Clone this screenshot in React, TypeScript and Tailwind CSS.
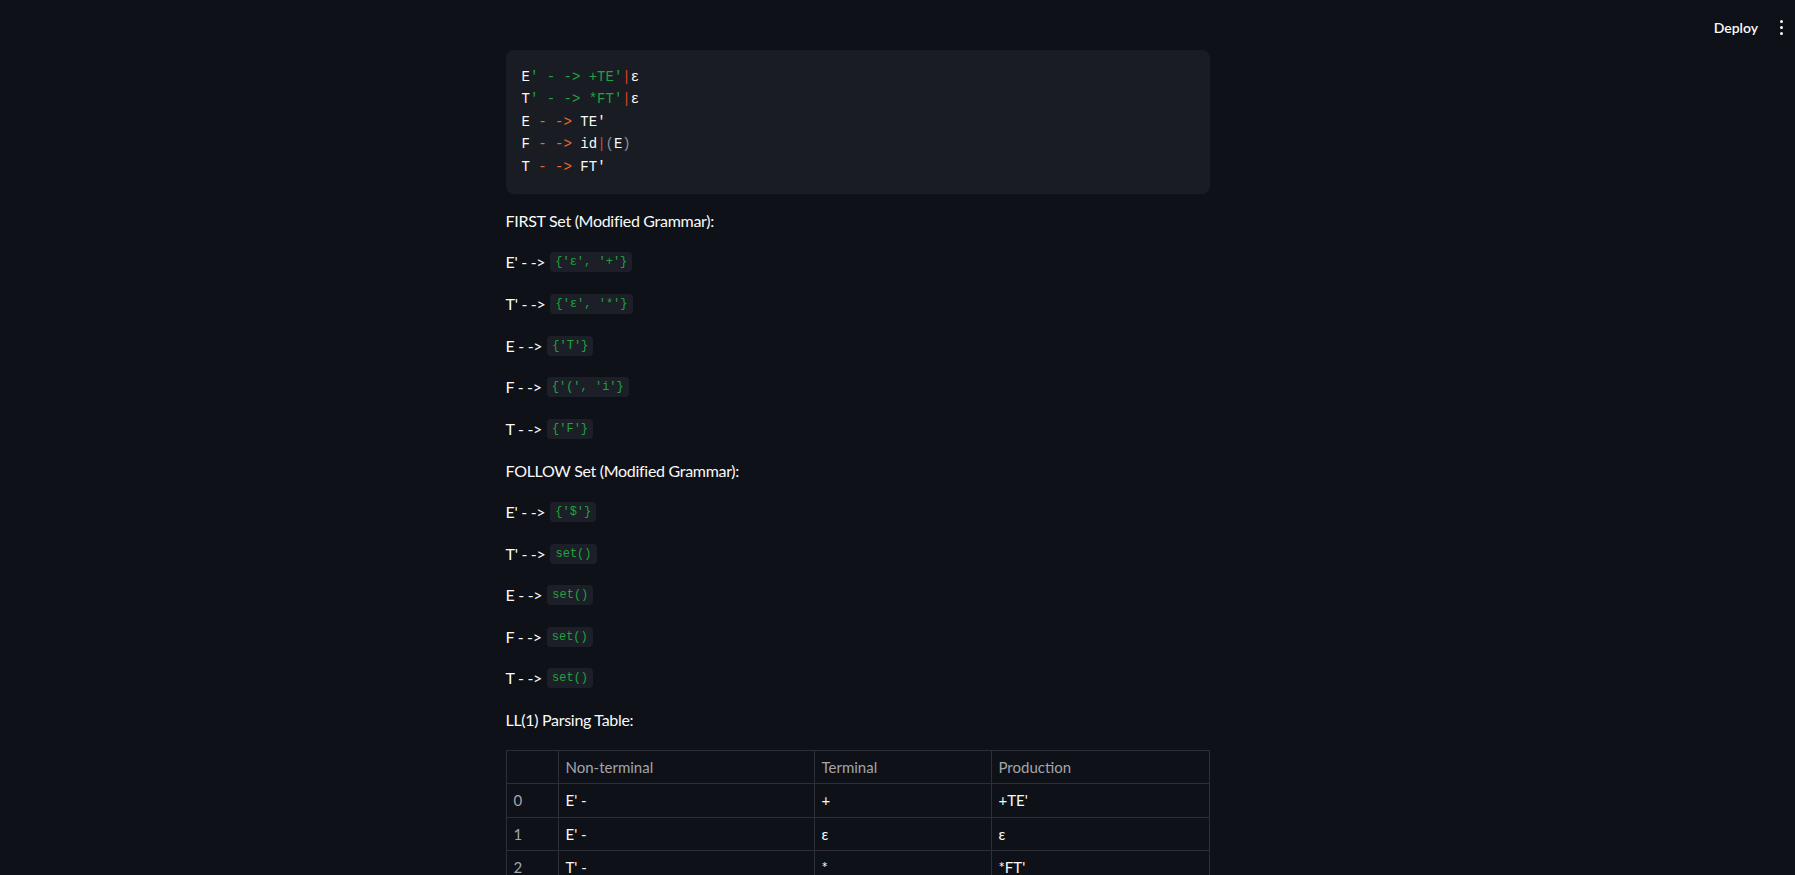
import React from 'react';

const GREEN = 'text-[#1fa33f]';
const ORANGE = 'text-[#f0672c]';
const BAR = 'text-[#dc4420]';
const GREY = 'text-[#8b8f98]';

type Seg = [string, string?];

const codeLines: Seg[][] = [
  [['E'], ["' - -> +TE'", GREEN], ['|', BAR], ['ε']],
  [['T'], ["' - -> *FT'", GREEN], ['|', BAR], ['ε']],
  [['E'], [' - ->', ORANGE], [" TE'"]],
  [['F'], [' - ->', ORANGE], [' id'], ['|', BAR], ['(', GREY], ['E'], [')', GREY]],
  [['T'], [' - ->', ORANGE], [" FT'"]],
];

const firstSet = [
  ["E' - ->", "{'ε', '+'}"],
  ["T' - ->", "{'ε', '*'}"],
  ['E - ->', "{'T'}"],
  ['F - ->', "{'(', 'i'}"],
  ['T - ->', "{'F'}"],
];

const followSet = [
  ["E' - ->", "{'$'}"],
  ["T' - ->", 'set()'],
  ['E - ->', 'set()'],
  ['F - ->', 'set()'],
  ['T - ->', 'set()'],
];

const tableRows = [
  ["E' -", '+', "+TE'"],
  ["E' -", 'ε', 'ε'],
  ["T' -", '*', "*FT'"],
  ["T' -", 'ε', 'ε'],
  ['E -', '(', "TE'"],
  ['E -', 'i', "TE'"],
];

const mono = { fontFamily: '"Liberation Mono", "DejaVu Sans Mono", monospace' };

function SetLine({ label, value }: { label: string; value: string }) {
  return (
    <p className="flex h-[25.6px] items-center gap-[5px] tracking-[-0.3px]">
      <span>{label}</span>
      <code
        style={mono}
        className="rounded-[4px] bg-[#1c1f27] px-[5px] py-[2px] text-[12px] leading-[16px] tracking-normal text-[#1fa33f]"
      >
        {value}
      </code>
    </p>
  );
}

export default function App() {
  return (
    <div
      className="relative min-h-screen bg-[#0e1117] text-[#fafafa]"
      style={{ fontFamily: 'Lato, "Liberation Sans", sans-serif' }}
    >
      {/* header */}
      <div className="absolute right-0 top-0 flex h-[55px] items-center gap-[20px] pr-[10px]">
        <span className="text-[14px] font-semibold text-[#fafafa]">Deploy</span>
        <div className="flex flex-col items-center gap-[3px] px-[2px]">
          <span className="block h-[3px] w-[3px] rounded-full bg-[#fafafa]" />
          <span className="block h-[3px] w-[3px] rounded-full bg-[#fafafa]" />
          <span className="block h-[3px] w-[3px] rounded-full bg-[#fafafa]" />
        </div>
      </div>

      <div className="flex justify-center pr-[80px] pt-[50px]">
        <div className="flex w-[704px] flex-col gap-4 text-[16px]">
          <pre
            style={mono}
            className="rounded-lg bg-[#1a1c24] px-4 py-4 text-[14px] leading-[22.4px] text-[#fafafa]"
          >
            {codeLines.map((line, i) => (
              <div key={i}>
                {line.map(([t, c], j) => (
                  <span key={j} className={c}>
                    {t}
                  </span>
                ))}
              </div>
            ))}
          </pre>

          <p className="-mt-[2px] h-[25.6px] leading-[25.6px] tracking-[-0.3px]">FIRST Set (Modified Grammar):</p>
          {firstSet.map(([l, v]) => (
            <SetLine key={'f' + l} label={l} value={v} />
          ))}

          <p className="h-[25.6px] leading-[25.6px] tracking-[-0.3px]">FOLLOW Set (Modified Grammar):</p>
          {followSet.map(([l, v]) => (
            <SetLine key={'w' + l} label={l} value={v} />
          ))}

          <p className="h-[25.6px] leading-[25.6px] tracking-[-0.3px]">LL(1) Parsing Table:</p>

          <table className="mt-[1px] w-full table-fixed border-collapse text-[15px] leading-[22.4px]">
            <colgroup>
              <col className="w-[52px]" />
              <col className="w-[256px]" />
              <col className="w-[177px]" />
              <col />
            </colgroup>
            <thead>
              <tr>
                <th className="border border-[#2c2f37] px-[7px] py-[5px] text-left font-normal text-[#a3a5aa]"></th>
                <th className="border border-[#2c2f37] px-[7px] py-[5px] text-left font-normal text-[#a3a5aa]">
                  Non-terminal
                </th>
                <th className="border border-[#2c2f37] px-[7px] py-[5px] text-left font-normal text-[#a3a5aa]">
                  Terminal
                </th>
                <th className="border border-[#2c2f37] px-[7px] py-[5px] text-left font-normal text-[#a3a5aa]">
                  Production
                </th>
              </tr>
            </thead>
            <tbody>
              {tableRows.map((r, i) => (
                <tr key={i}>
                  <td className="border border-[#2c2f37] px-[7px] py-[5px] text-[#a3a5aa]">{i}</td>
                  {r.map((c, j) => (
                    <td key={j} className="border border-[#2c2f37] px-[7px] py-[5px]">
                      {c}
                    </td>
                  ))}
                </tr>
              ))}
            </tbody>
          </table>
        </div>
      </div>
    </div>
  );
}
